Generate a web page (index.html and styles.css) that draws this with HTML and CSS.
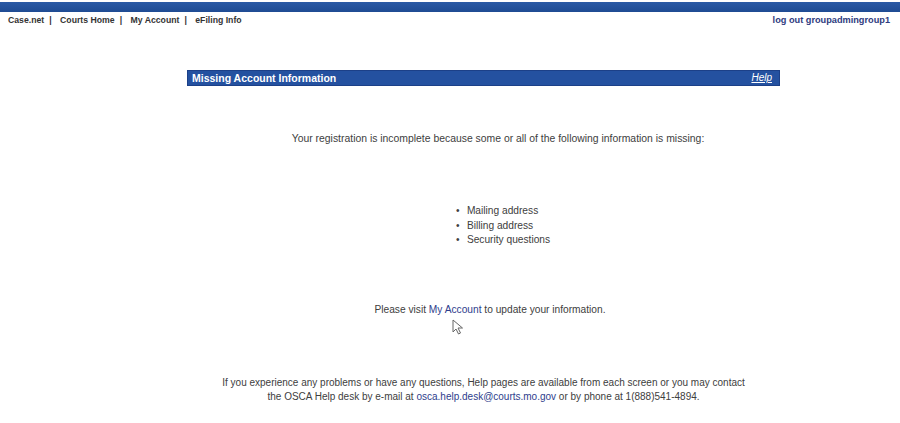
FILE: index.html
```html
<!DOCTYPE html>
<html lang="en">
<head>
<meta charset="utf-8">
<title>Missing Account Information</title>
<link rel="stylesheet" href="styles.css">
</head>
<body>
<div class="topbar"></div>
<div class="navrow">
  <div class="navlinks">
    <a href="#">Case.net</a><span class="sep">|</span>
    <a href="#">Courts Home</a><span class="sep">|</span>
    <a href="#">My Account</a><span class="sep">|</span>
    <a href="#">eFiling Info</a>
  </div>
  <a class="logout" href="#">log out groupadmingroup1</a>
</div>

<main class="content">
  <div class="titlebar">
    <span class="title">Missing Account Information</span>
    <a class="help" href="#">Help</a>
  </div>

  <p class="intro">Your registration is incomplete because some or all of the following information is missing:</p>

  <ul class="missing">
    <li>Mailing address</li>
    <li>Billing address</li>
    <li>Security questions</li>
  </ul>

  <p class="visit">Please visit <a href="#">My Account</a> to update your information.</p>
  <svg class="cursor" width="12" height="16" viewBox="0 0 12 16">
    <path d="M1 1 L1 13 L4 10 L6.5 15 L8.5 14 L6 9 L10.5 9 Z" fill="#fff" stroke="#666" stroke-width="1" stroke-linejoin="round"/>
  </svg>

  <p class="contact">If you experience any problems or have any questions, Help pages are available from each screen or you may contact<br>
  the OSCA Help desk by e-mail at <a href="#">osca.help.desk@courts.mo.gov</a> or by phone at 1(888)541-4894.</p>
</main>
</body>
</html>
```

FILE: styles.css
```css
html, body {
  margin: 0;
  padding: 0;
  background: #fff;
}

body {
  font-family: "Liberation Sans", Arial, sans-serif;
  color: #404040;
  width: 900px;
  height: 423px;
  overflow: hidden;
}

a {
  text-decoration: none;
}

.topbar {
  height: 10px;
  margin-top: 2px;
  background: linear-gradient(#2b5aa6, #1f4b93);
}

.navrow {
  display: flex;
  justify-content: space-between;
  align-items: center;
  height: 14px;
  padding: 1px 10px 0 8px;
  font-size: 8.7px;
  font-weight: bold;
}

.navlinks a {
  color: #333;
}

.sep {
  margin: 0 6px 0 5px;
  color: #333;
}

.logout {
  color: #2e3b7e;
  font-size: 9.2px;
}

/* centred column, shifted so its axis sits at x≈483 */
.content {
  display: flex;
  flex-direction: column;
  align-items: center;
  padding: 43px 0 0 67px;
  font-size: 10.2px;
  line-height: 14px;
}

.titlebar {
  width: 593px;
  height: 16px;
  box-sizing: border-box;
  background: #2451a0;
  display: flex;
  justify-content: space-between;
  align-items: center;
  padding: 0 7px 0 4px;
  border: 1px solid #1c4088;
}

.title {
  color: #fff;
  font-weight: bold;
  font-size: 10.5px;
}

.help {
  color: #fff;
  font-style: italic;
  text-decoration: underline;
  font-size: 10px;
}

.intro {
  margin: 46px 0 0 29px;
  font-size: 10.4px;
}

.missing {
  margin: 58px 0 0 39px;
  padding: 0;
  list-style: none;
  line-height: 14.5px;
}

.missing li::before {
  content: "\2022";
  display: inline-block;
  width: 11px;
}

.visit {
  margin: 55px 0 0 13px;
}

.visit a {
  color: #2e3d8c;
}

.cursor {
  align-self: flex-start;
  margin: 2px 0 0 385px;
}

.contact {
  margin: 41px 0 0 0;
  text-align: center;
  font-size: 10px;
}

.contact a {
  color: #2e3d8c;
}
```
